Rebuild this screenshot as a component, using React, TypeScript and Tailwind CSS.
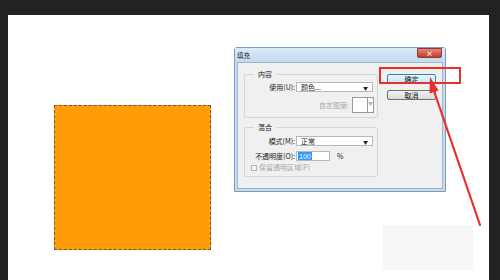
import React from "react";

const cjk = { fontFamily: '"Noto Sans CJK SC", "Noto Sans", sans-serif' };

function Caret({ muted }: { muted?: boolean }) {
  return (
    <span className={`text-[5px] leading-none ${muted ? "text-[#b0b0b0]" : "text-[#222]"}`}>
      ▼
    </span>
  );
}

function Select({ value }: { value: string }) {
  return (
    <div className="flex h-[10px] w-[77px] items-center justify-between border border-[#b5b8bf] bg-white pl-[4px] pr-[4px]">
      <span className="text-[7px] leading-none text-[#1a1a1a]">{value}</span>
      <Caret />
    </div>
  );
}

function Row({ label, children, muted }: { label: string; children: React.ReactNode; muted?: boolean }) {
  return (
    <div className="flex items-center">
      <span
        className={`w-[51px] pr-[1px] text-right text-[7px] leading-none ${muted ? "text-[#9a9a9a]" : "text-[#1a1a1a]"}`}
      >
        {label}
      </span>
      {children}
    </div>
  );
}

function Group({ title, children, className }: { title: string; children: React.ReactNode; className?: string }) {
  return (
    <fieldset className={`rounded-[2px] border border-[#cfd6dc] px-0 ${className ?? ""}`}>
      <legend className="ml-[9px] px-[4px] text-[7px] leading-[8px] text-[#1a1a1a]">{title}</legend>
      {children}
    </fieldset>
  );
}

function Dialog() {
  return (
    <div className="flex h-[145px] w-[212px] flex-col rounded-t-[3px] border border-[#7d9bbd] bg-[#c8dcf1]" style={cjk}>
      <div className="flex h-[13px] items-start justify-between bg-gradient-to-b from-[#dbe9f8] to-[#c4dbf2] pl-[2px] pr-[3px]">
        <span className="mt-[4px] text-[6.5px] leading-none text-[#222]">填充</span>
        <div className="mt-[0px] flex h-[10px] w-[25px] items-center justify-center rounded-b-[2px] border border-[#8c3a32] bg-gradient-to-b from-[#e4877b] to-[#c2392b] text-[7px] font-bold leading-none text-white">
          ×
        </div>
      </div>
      <div className="flex flex-1 px-[2px] pb-[2px] pt-[1px]">
        <div className="flex flex-1 border border-[#9fb3c8] bg-[#f0f0f0] pl-[6px] pt-[7px]">
          <div className="flex w-[134px] flex-col">
            <Group title="内容" className="h-[48px]">
              <div className="mt-[4px] flex flex-col gap-[5px]">
                <Row label="使用(U):">
                  <Select value="颜色..." />
                </Row>
                <div className="flex items-center justify-end pr-[3px]">
                  <span className="mr-[3px] text-[7px] leading-none text-[#a8a8a8]">自定图案:</span>
                  <div className="flex h-[16px] w-[22px] border border-[#9a9a9a] bg-white">
                    <div className="flex-1 border-r border-[#9a9a9a]" />
                    <div className="flex w-[5px] items-start justify-center pt-[2px]">
                      <Caret muted />
                    </div>
                  </div>
                </div>
              </div>
            </Group>
            <Group title="混合" className="mt-[5px] h-[54px]">
              <div className="mt-[5px] flex flex-col gap-[5px]">
                <Row label="模式(M):">
                  <Select value="正常" />
                </Row>
                <Row label="不透明度(O):">
                  <div className="flex h-[10px] w-[34px] items-center border border-[#b5b8bf] bg-white pl-[1px]">
                    <span className="bg-[#3399ff] px-[1px] text-[7px] leading-[8px] text-white">100</span>
                  </div>
                  <span className="ml-[7px] text-[7px] leading-none text-[#1a1a1a]">%</span>
                </Row>
              </div>
              <div className="mt-[3px] flex items-center pl-[6px]">
                <div className="h-[6px] w-[6px] border border-[#b8b8b8] bg-[#f8f8f8]" />
                <span className="ml-[2px] text-[7px] leading-none text-[#a8a8a8]">保留透明区域(P)</span>
              </div>
            </Group>
          </div>
          <div className="ml-[9px] flex flex-col gap-[6px] pt-[4px]">
            <div className="flex h-[10px] w-[49px] items-center justify-center rounded-[2px] border border-[#3c7fb1] bg-gradient-to-b from-[#eaf6fd] to-[#bee6fd] text-[7px] leading-none text-[#111]">
              确定
            </div>
            <div className="flex h-[10px] w-[49px] items-center justify-center rounded-[2px] border border-[#707070] bg-gradient-to-b from-[#f2f2f2] to-[#dadada] text-[7px] leading-none text-[#111]">
              取消
            </div>
          </div>
        </div>
      </div>
    </div>
  );
}

export default function App() {
  return (
    <div className="relative flex h-[280px] w-[500px] bg-[#222222] pl-[8px] pr-[11px] pt-[15px]">
      <div className="flex flex-1 items-start bg-white">
        <div className="ml-[46px] mt-[90px] h-[145px] w-[157px] border border-dashed border-[#6b5a3a] bg-[#ff9c07]" />
        <div className="ml-[23px] mt-[32px]">
          <Dialog />
        </div>
      </div>
      <div className="absolute left-[383px] top-[225px] h-[45px] w-[90px] bg-[#f6f6f6]" />
      <div className="absolute left-[379px] top-[67px] h-[17px] w-[82px] border-2 border-[#e8302a]" />
      <svg className="pointer-events-none absolute left-0 top-0" width="500" height="280" viewBox="0 0 500 280">
        <line x1="480" y1="225" x2="433" y2="88" stroke="#e8302a" strokeWidth="2.2" strokeLinecap="round" />
        <polygon points="430,77 438.5,90.5 429.5,93.5" fill="#e8302a" />
      </svg>
    </div>
  );
}
